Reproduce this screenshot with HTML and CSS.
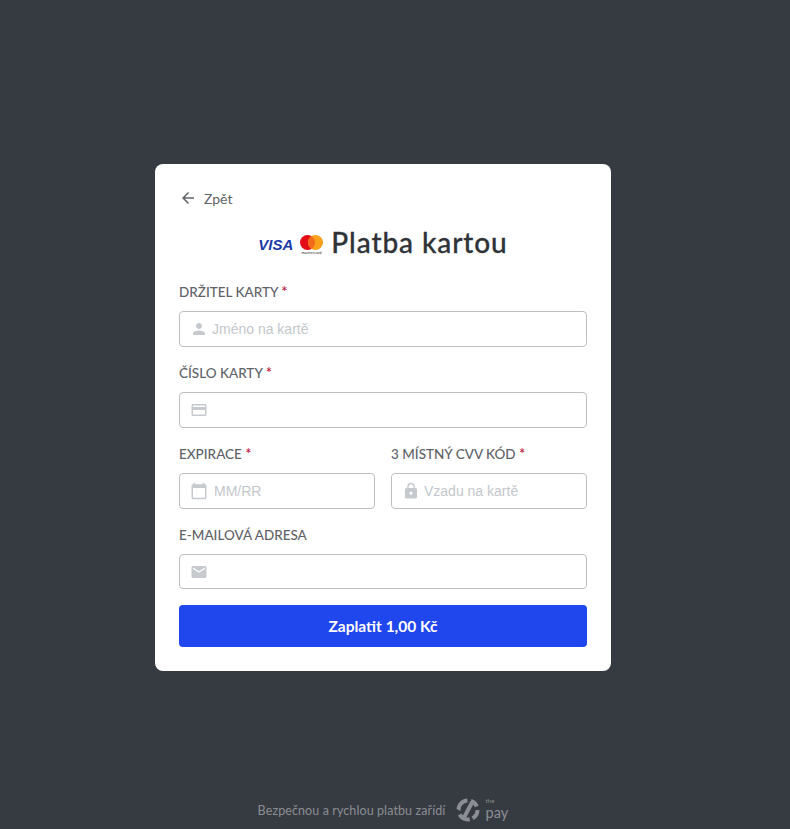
FILE: index.html
```html
<!DOCTYPE html>
<html lang="cs">
<head>
    <meta charset="UTF-8">
    <meta name="viewport" content="width=device-width, initial-scale=1.0">
    <title>Platba kartou</title>
    <link rel="stylesheet" href="styles.css">
</head>
<body>
    <div class="page">
        <main class="card">
            <a class="back" href="#">
                <svg class="back-icon" viewBox="0 0 24 24"><path d="M20 11H7.83l5.59-5.59L12 4l-8 8 8 8 1.41-1.41L7.83 13H20v-2z"/></svg>
                <span>Zpět</span>
            </a>
            <h1 class="title">
                <span class="visa">VISA</span>
                <svg class="mastercard" viewBox="0 0 23 20">
                    <circle cx="7.5" cy="7.5" r="7.5" fill="#e30d17"/>
                    <circle cx="15.5" cy="7.5" r="7.5" fill="#f9a11b"/>
                    <path d="M11.5 1.15a7.5 7.5 0 0 1 0 12.7a7.5 7.5 0 0 1 0-12.7z" fill="#f26a1b"/>
                    <text x="11.5" y="19" text-anchor="middle" class="mastercard-text">mastercard</text>
                </svg>
                <span class="title-text">Platba kartou</span>
            </h1>
            <form class="form">
                <div class="field">
                    <label class="label">DRŽITEL KARTY <span class="req">*</span></label>
                    <div class="input-box">
                        <svg class="icon" viewBox="0 0 24 24"><path d="M12 12c2.21 0 4-1.79 4-4s-1.79-4-4-4-4 1.79-4 4 1.79 4 4 4zm0 2c-2.67 0-8 1.34-8 4v2h16v-2c0-2.66-5.33-4-8-4z"/></svg>
                        <input type="text" placeholder="Jméno na kartě">
                    </div>
                </div>
                <div class="field">
                    <label class="label">ČÍSLO KARTY <span class="req">*</span></label>
                    <div class="input-box">
                        <svg class="icon" viewBox="0 0 24 24"><path d="M20 4H4c-1.11 0-1.99.89-1.99 2L2 18c0 1.11.89 2 2 2h16c1.11 0 2-.89 2-2V6c0-1.11-.89-2-2-2zm0 14H4v-6h16v6zm0-10H4V6h16v2z"/></svg>
                        <input type="text">
                    </div>
                </div>
                <div class="field-row">
                    <div class="field">
                        <label class="label">EXPIRACE <span class="req">*</span></label>
                        <div class="input-box input-box-date">
                            <svg class="icon" viewBox="0 0 24 24"><path d="M20 3h-1V1h-2v2H7V1H5v2H4c-1.1 0-2 .9-2 2v16c0 1.1.9 2 2 2h16c1.1 0 2-.9 2-2V5c0-1.1-.9-2-2-2zm0 18H4V8h16v13z"/></svg>
                            <input type="text" placeholder="MM/RR">
                        </div>
                    </div>
                    <div class="field">
                        <label class="label">3 MÍSTNÝ CVV KÓD <span class="req">*</span></label>
                        <div class="input-box">
                            <svg class="icon" viewBox="0 0 24 24"><path d="M18 8h-1V6c0-2.76-2.24-5-5-5S7 3.24 7 6v2H6c-1.1 0-2 .9-2 2v10c0 1.1.9 2 2 2h12c1.1 0 2-.9 2-2V10c0-1.1-.9-2-2-2zm-6 9c-1.1 0-2-.9-2-2s.9-2 2-2 2 .9 2 2-.9 2-2 2zm3.1-9H8.9V6c0-1.71 1.39-3.1 3.1-3.1 1.71 0 3.1 1.39 3.1 3.1v2z"/></svg>
                            <input type="text" placeholder="Vzadu na kartě">
                        </div>
                    </div>
                </div>
                <div class="field field-mail">
                    <label class="label">E-MAILOVÁ ADRESA</label>
                    <div class="input-box input-box-mail">
                        <svg class="icon" viewBox="0 0 24 24"><path d="M20 4H4c-1.1 0-1.99.9-1.99 2L2 18c0 1.1.9 2 2 2h16c1.1 0 2-.9 2-2V6c0-1.1-.9-2-2-2zm0 4l-8 5-8-5V6l8 5 8-5v2z"/></svg>
                        <input type="email">
                    </div>
                </div>
                <button class="pay" type="button">Zaplatit 1,00 Kč</button>
            </form>
        </main>
        <footer class="footer">
            <span>Bezpečnou a rychlou platbu zařídí</span>
            <svg class="thepay-mark" viewBox="0 0 26 24">
                <circle class="thepay-ring" cx="13" cy="12" r="9.5" pathLength="100" stroke-dasharray="17 5 20 8 24 6 14 6"/>
                <path d="M15.5 3 19 5 10.5 21 7 19z"/>
            </svg>
            <span class="thepay-name"><small>the</small><span>pay</span></span>
        </footer>
    </div>
</body>
</html>
```

FILE: styles.css
```css
* {
    margin: 0;
    padding: 0;
    box-sizing: border-box;
}

body {
    background: #363a41;
    font-family: 'Lato', sans-serif;
}

.page {
    min-height: 829px;
    display: flex;
    flex-direction: column;
    align-items: center;
    padding: 164px 24px 0 0;
}

.card {
    width: 456px;
    height: 507px;
    background: #fff;
    border-radius: 8px;
    padding: 24px;
}

.back {
    display: flex;
    align-items: center;
    gap: 7px;
    height: 20px;
    color: #5f6368;
    font-size: 14px;
    text-decoration: none;
}

.back-icon {
    width: 18px;
    height: 18px;
    fill: #5f6368;
}

.title {
    display: flex;
    align-items: center;
    justify-content: center;
    height: 36px;
    margin-top: 16px;
    font-weight: 400;
}

.visa {
    font-family: 'Liberation Sans', sans-serif;
    font-size: 15px;
    font-weight: 700;
    font-style: italic;
    color: #1a3aa8;
    margin: 5px 7px 0 0;
}

.mastercard {
    width: 23px;
    height: 20px;
    margin: 6px 8px 0 0;
}

.mastercard-text {
    font-family: 'Liberation Sans', sans-serif;
    font-size: 4px;
    fill: #333;
}

.title-text {
    font-size: 28px;
    font-weight: 500;
    color: #2f3338;
    letter-spacing: 0.9px;
    -webkit-text-stroke: 0.3px #2f3338;
}

.form {
    display: flex;
    flex-direction: column;
    gap: 15px;
    margin-top: 21px;
}

.field-row {
    display: grid;
    grid-template-columns: 196px 196px;
    gap: 16px;
}

.label {
    display: block;
    height: 20px;
    margin-bottom: 10px;
    font-size: 13.5px;
    font-weight: 500;
    line-height: 20px;
    color: #5f6368;
}

.field-mail .label {
    padding-top: 1px;
}

.req {
    color: #c0143c;
    font-size: 15px;
}

.input-box {
    display: flex;
    align-items: center;
    gap: 4px;
    height: 36px;
    padding: 0 10px;
    border: 1px solid #bdbfc2;
    border-radius: 4px;
    background: #fff;
}

.input-box-date {
    gap: 6px;
}

.input-box-mail {
    height: 35px;
}

.icon {
    flex: none;
    width: 18px;
    height: 18px;
    fill: #c6c9cd;
}

.input-box input {
    flex: 1;
    min-width: 0;
    height: 100%;
    border: none;
    outline: none;
    background: none;
    font-family: 'Liberation Sans', sans-serif;
    font-size: 14px;
    color: #333;
}

.input-box input::placeholder {
    color: #c3c7cc;
    opacity: 1;
}

.pay {
    height: 42px;
    margin-top: 1px;
    border: none;
    border-radius: 4px;
    background: #2046ee;
    color: #fff;
    font-family: 'Lato', sans-serif;
    font-size: 15.5px;
    font-weight: 700;
    cursor: pointer;
}

.footer {
    display: flex;
    align-items: center;
    margin-top: 127px;
    height: 24px;
    color: #8b8e93;
    font-size: 12.5px;
    letter-spacing: 0.1px;
}

.thepay-mark {
    width: 26px;
    height: 24px;
    margin-left: 10px;
    fill: #8b8e93;
}

.thepay-ring {
    fill: none;
    stroke: #8b8e93;
    stroke-width: 4;
}

.thepay-name {
    display: flex;
    flex-direction: column;
    margin: 0 0 3px 4px;
    font-size: 14.5px;
    line-height: 14px;
}

.thepay-name small {
    margin-bottom: 2px;
    font-size: 6px;
    line-height: 7px;
}
```
